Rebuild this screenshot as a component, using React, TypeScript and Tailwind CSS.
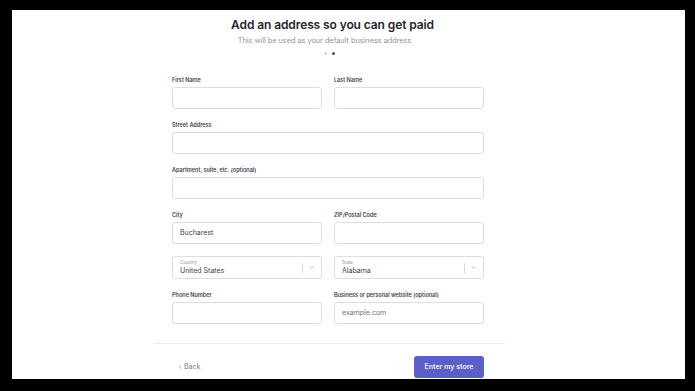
import { ChevronDown, ChevronLeft } from 'lucide-react';

function Field({ label, value, placeholder }: { label: string; value?: string; placeholder?: string }) {
  return (
    <div className="flex flex-col">
      <span className="mb-[3px] text-[5.5px] font-semibold leading-[8px] text-[#3f4451]">{label}</span>
      <div className="flex h-[22px] items-center rounded-[3px] border border-[#dcdee3] px-[7px] text-[7px]">
        {value && <span className="text-[#3a3f4b]">{value}</span>}
        {placeholder && <span className="text-[#6b7280]">{placeholder}</span>}
      </div>
    </div>
  );
}

function SelectBox({ label, value }: { label: string; value: string }) {
  return (
    <div className="flex h-[23px] items-center rounded-[3px] border border-[#dcdee3] pl-[7px] pr-[6px]">
      <div className="flex flex-1 flex-col">
        <span className="text-[4.5px] leading-[6px] text-[#8a8f99]">{label}</span>
        <span className="text-[7px] leading-[9px] text-[#3a3f4b]">{value}</span>
      </div>
      <div className="mr-[5px] h-[10px] w-px bg-[#d6d8dd]" />
      <ChevronDown className="h-[7px] w-[7px] text-[#8a8f99]" strokeWidth={2} />
    </div>
  );
}

export default function App() {
  return (
    <div
      className="flex h-[391px] w-[695px] bg-black pb-[12px] pl-[12px] pr-[10px] pt-[10px]"
      style={{ fontFamily: 'Inter, "Liberation Sans", sans-serif' }}
    >
      <div className="flex-1 bg-white">
        <div className="ml-[142px] flex w-[351px] flex-col">
          <div className="flex flex-col items-center pl-[6px] pt-[7px]">
            <h1 className="text-[12px] font-semibold leading-[15px] tracking-[-0.1px] text-[#1f2430]">
              Add an address so you can get paid
            </h1>
            <p className="mr-[16px] mt-[4px] text-[7.3px] leading-[9px] text-[#8f939b]">
              This will be used as your default business address
            </p>
            <div className="mt-[7px] flex gap-[5px] pr-[6px]">
              <span className="h-[3px] w-[3px] rounded-full bg-[#d4d6da]" />
              <span className="h-[3px] w-[3px] rounded-full bg-[#4b5060]" />
            </div>
          </div>

          <div className="mt-[21px] flex flex-col gap-[12px] pl-[18px] pr-[21px]">
            <div className="grid grid-cols-2 gap-[12px]">
              <Field label="First Name" />
              <Field label="Last Name" />
            </div>
            <Field label="Street Address" />
            <Field label="Apartment, suite, etc. (optional)" />
            <div className="grid grid-cols-2 gap-[12px]">
              <Field label="City" value="Bucharest" />
              <Field label="ZIP/Postal Code" />
            </div>
            <div className="grid grid-cols-2 gap-[12px]">
              <SelectBox label="Country" value="United States" />
              <SelectBox label="State" value="Alabama" />
            </div>
            <div className="grid grid-cols-2 gap-[12px]">
              <Field label="Phone Number" />
              <Field label="Business or personal website (optional)" placeholder="example.com" />
            </div>
          </div>

          <div className="mt-[19px] h-px bg-[#eceef1]" />

          <div className="mt-[12px] flex items-center justify-between pl-[23px] pr-[21px]">
            <div className="flex items-center gap-[1px] text-[7px] font-medium text-[#8a8f99]">
              <ChevronLeft className="h-[6px] w-[6px]" strokeWidth={2.5} />
              <span>Back</span>
            </div>
            <button className="flex h-[22px] w-[70px] items-center justify-center rounded-[3px] bg-[#5b5fc7] text-[7px] font-semibold text-[#eeeefa]">
              Enter my store
            </button>
          </div>
        </div>
      </div>
    </div>
  );
}
